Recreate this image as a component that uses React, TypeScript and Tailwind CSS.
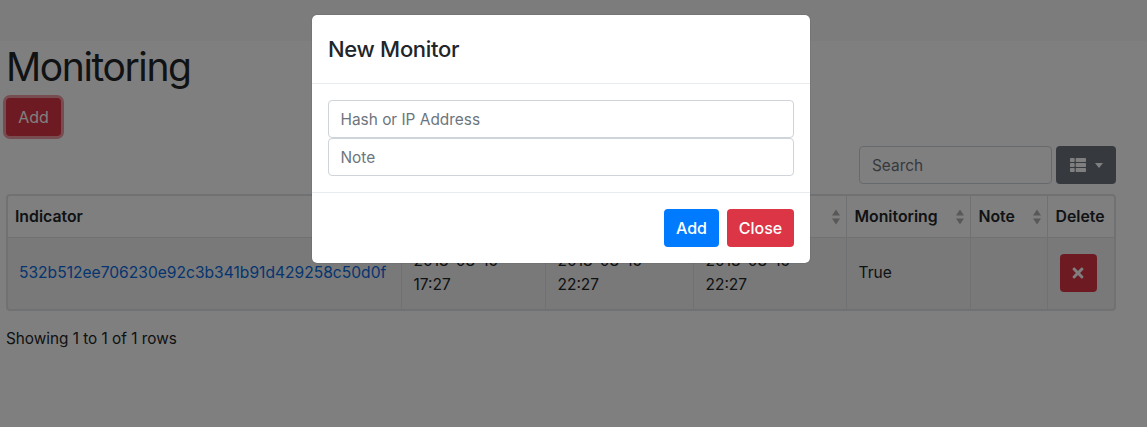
import { FaThList, FaTimes } from "react-icons/fa";

const font = "font-['Inter','Liberation_Sans',sans-serif]";

function SortArrows() {
  return (
    <svg
      width="8"
      height="16"
      viewBox="0 0 8 16"
      className="absolute right-[6px] top-[13px]"
    >
      <path d="M4 0.5 L8 6.5 H0 Z" fill="#b0b0b0" />
      <path d="M4 15.5 L8 9.5 H0 Z" fill="#b0b0b0" />
    </svg>
  );
}

// the three middle headings sit behind the modal in the picture
const headers = [
  { label: "Indicator", width: "w-[393px]", sortable: true },
  { label: "", width: "w-[144px]", sortable: true },
  { label: "", width: "w-[148px]", sortable: true },
  { label: "", width: "w-[153px]", sortable: true },
  { label: "Monitoring", width: "w-[124px]", sortable: true },
  { label: "Note", width: "w-[77px]", sortable: true },
  { label: "Delete", width: "w-[69px]", sortable: false },
];

function MonitorTable() {
  return (
    <div className="mt-[10px] w-[1110px] overflow-hidden rounded-[4px] border-2 border-[#dee2e6]">
      <table className="w-full table-fixed border-collapse text-[#212529]">
        <thead>
          <tr className="h-[41px]">
            {headers.map((h, i) => (
              <th
                key={i}
                className={`relative border-r border-b border-[#dee2e6] px-2 pt-[1px] text-left text-[15.8px] font-semibold first:pl-[7px] last:border-r-0 ${h.width}`}
              >
                {h.label}
                {h.sortable && <SortArrows />}
              </th>
            ))}
          </tr>
        </thead>
        <tbody>
          <tr className="h-[72px] bg-black/5 text-[15.5px] leading-[24px]">
            <td className="border-r border-[#dee2e6] pr-1 pl-[11px] text-[15.6px] text-[#0a6be0]">
              532b512ee706230e92c3b341b91d429258c50d0f
            </td>
            <td className="border-r border-[#dee2e6] px-3">2018-08-15 17:27</td>
            <td className="border-r border-[#dee2e6] px-3">2018-08-15 22:27</td>
            <td className="border-r border-[#dee2e6] px-3">2018-08-15 22:27</td>
            <td className="border-r border-[#dee2e6] px-3">True</td>
            <td className="border-r border-[#dee2e6] px-3"></td>
            <td className="pl-3">
              <button className="inline-flex h-[38px] w-[37px] items-center justify-center rounded-[4px] bg-[#dc3545] align-middle text-white">
                <FaTimes size={16} />
              </button>
            </td>
          </tr>
        </tbody>
      </table>
    </div>
  );
}

export default function App() {
  return (
    <div className={`relative h-[427px] w-[1147px] overflow-hidden bg-white text-[#212529] ${font}`}>
      <div className="h-[41px] bg-[#f8f9fa]"></div>

      <div className="px-[6px]">
        <h1 className="mt-[2px] h-[48px] text-[39px] leading-[48px] font-normal tracking-[-1.4px]">
          Monitoring
        </h1>
        <button className="mt-[7px] h-[38px] w-[55px] rounded-[4px] bg-[#dc3545] text-[16px] text-white ring-[3px] ring-[#ee9aa2]">
          Add
        </button>

        <div className="mt-[10px] flex w-[1110px] justify-end gap-[4px]">
          <div className="flex h-[38px] w-[193px] items-center rounded-[4px] border border-[#ced4da] pt-[2px] pl-3 text-[15.4px] text-[#6c757d]">
            Search
          </div>
          <button className="flex h-[38px] w-[60px] items-center justify-center gap-[9px] rounded-[4px] bg-[#6c757d] text-white">
            <FaThList size={16} />
            <span className="h-0 w-0 border-x-[4.5px] border-t-[5px] border-x-transparent border-t-white"></span>
          </button>
        </div>

        <MonitorTable />

        <p className="mt-[16px] text-[15.3px] leading-[24px]">Showing 1 to 1 of 1 rows</p>
      </div>

      <div className="absolute inset-0 bg-black/50"></div>

      <div className="absolute top-[15px] left-[312px] w-[498px] rounded-[5px] bg-white shadow-[0_0_1px_rgba(0,0,0,0.5)]">
        <div className="flex h-[69px] items-center border-b border-[#e9ecef] px-4">
          <h5 className="text-[22px] leading-[30px] font-medium tracking-[-0.3px] text-[#212529]">New Monitor</h5>
        </div>
        <div className="flex flex-col p-4">
          <input
            placeholder="Hash or IP Address"
            className="h-[38px] w-full rounded-[4px] border border-[#ced4da] pr-3 pl-[11.5px] text-[15.4px] outline-none placeholder:text-[#6c757d]"
          />
          <input
            placeholder="Note"
            className="h-[38px] w-full rounded-[4px] border border-[#ced4da] pr-3 pl-[11.5px] text-[15.4px] outline-none placeholder:text-[#6c757d]"
          />
        </div>
        <div className="flex h-[71px] items-center justify-end gap-2 border-t border-[#e9ecef] px-4">
          <button className="h-[38px] w-[55px] rounded-[4px] bg-[#007bff] text-[16px] font-medium text-white">
            Add
          </button>
          <button className="h-[38px] w-[67px] rounded-[4px] bg-[#dc3545] text-[16px] font-medium text-white">
            Close
          </button>
        </div>
      </div>
    </div>
  );
}
